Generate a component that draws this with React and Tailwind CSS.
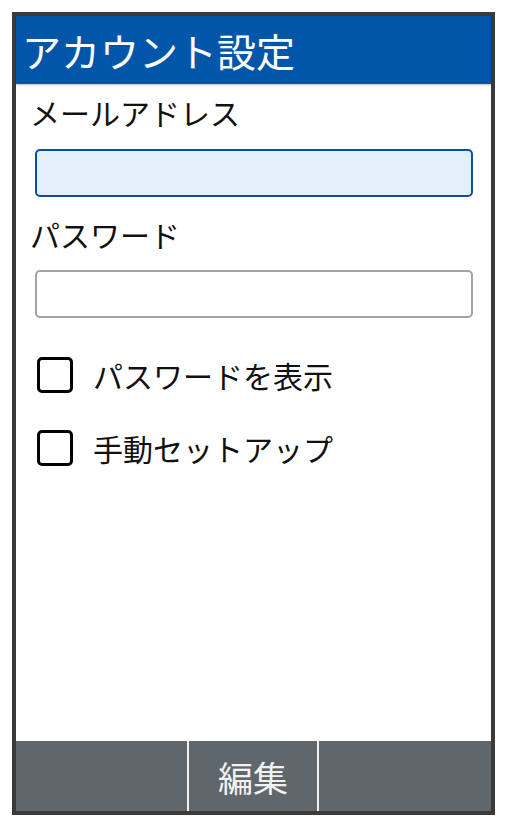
import React from 'react';

const Checkbox = ({ label }) => (
  <div className="flex items-center h-[36px]">
    <div className="w-[36px] h-[36px] border-[3px] border-black rounded-[5px] bg-white" />
    <span className="ml-[20px] text-[30px] leading-[30px] text-[#111]">{label}</span>
  </div>
);

const App = () => {
  return (
    <div
      className="w-[507px] h-[826px] bg-white pt-[12px] pl-[12px]"
      style={{ fontFamily: '"Noto Sans CJK JP", "Noto Sans", sans-serif' }}
    >
      <div className="w-[483px] h-[803px] border-4 border-[#3a3a3a] flex flex-col bg-white">
        {/* Header */}
        <div className="h-[68px] bg-[#0256a9] flex items-center pl-[6px] shadow-[0_1px_2px_rgba(0,0,0,0.25)]">
          <span className="text-white text-[39px] leading-[39px]">アカウント設定</span>
        </div>

        {/* Form */}
        <div className="flex-1 flex flex-col pl-[14px] pr-[18px] pt-[13px]">
          <div className="text-[30px] leading-[30px] text-[#111]">メールアドレス</div>
          <div className="mt-[22px] ml-[5px] h-[48px] rounded-[5px] border-2 border-[#0d4f9e] bg-[#e3f0fb]" />

          <div className="mt-[22px] text-[30px] leading-[30px] text-[#111]">パスワード</div>
          <div className="mt-[21px] ml-[5px] h-[48px] rounded-[5px] border-2 border-[#a3a3a3] bg-white" />

          <div className="mt-[39px] ml-[7px] flex flex-col gap-[37px]">
            <Checkbox label="パスワードを表示" />
            <Checkbox label="手動セットアップ" />
          </div>
        </div>

        {/* Footer */}
        <div className="h-[70px] bg-[#5f676d] flex">
          <div className="w-[171px]" />
          <div className="w-[132px] border-x-2 border-[#f0f0f0] flex items-center justify-center">
            <span className="text-[#f2f2f2] text-[35px] leading-[35px]">編集</span>
          </div>
          <div className="flex-1" />
        </div>
      </div>
    </div>
  );
};

export default App;
